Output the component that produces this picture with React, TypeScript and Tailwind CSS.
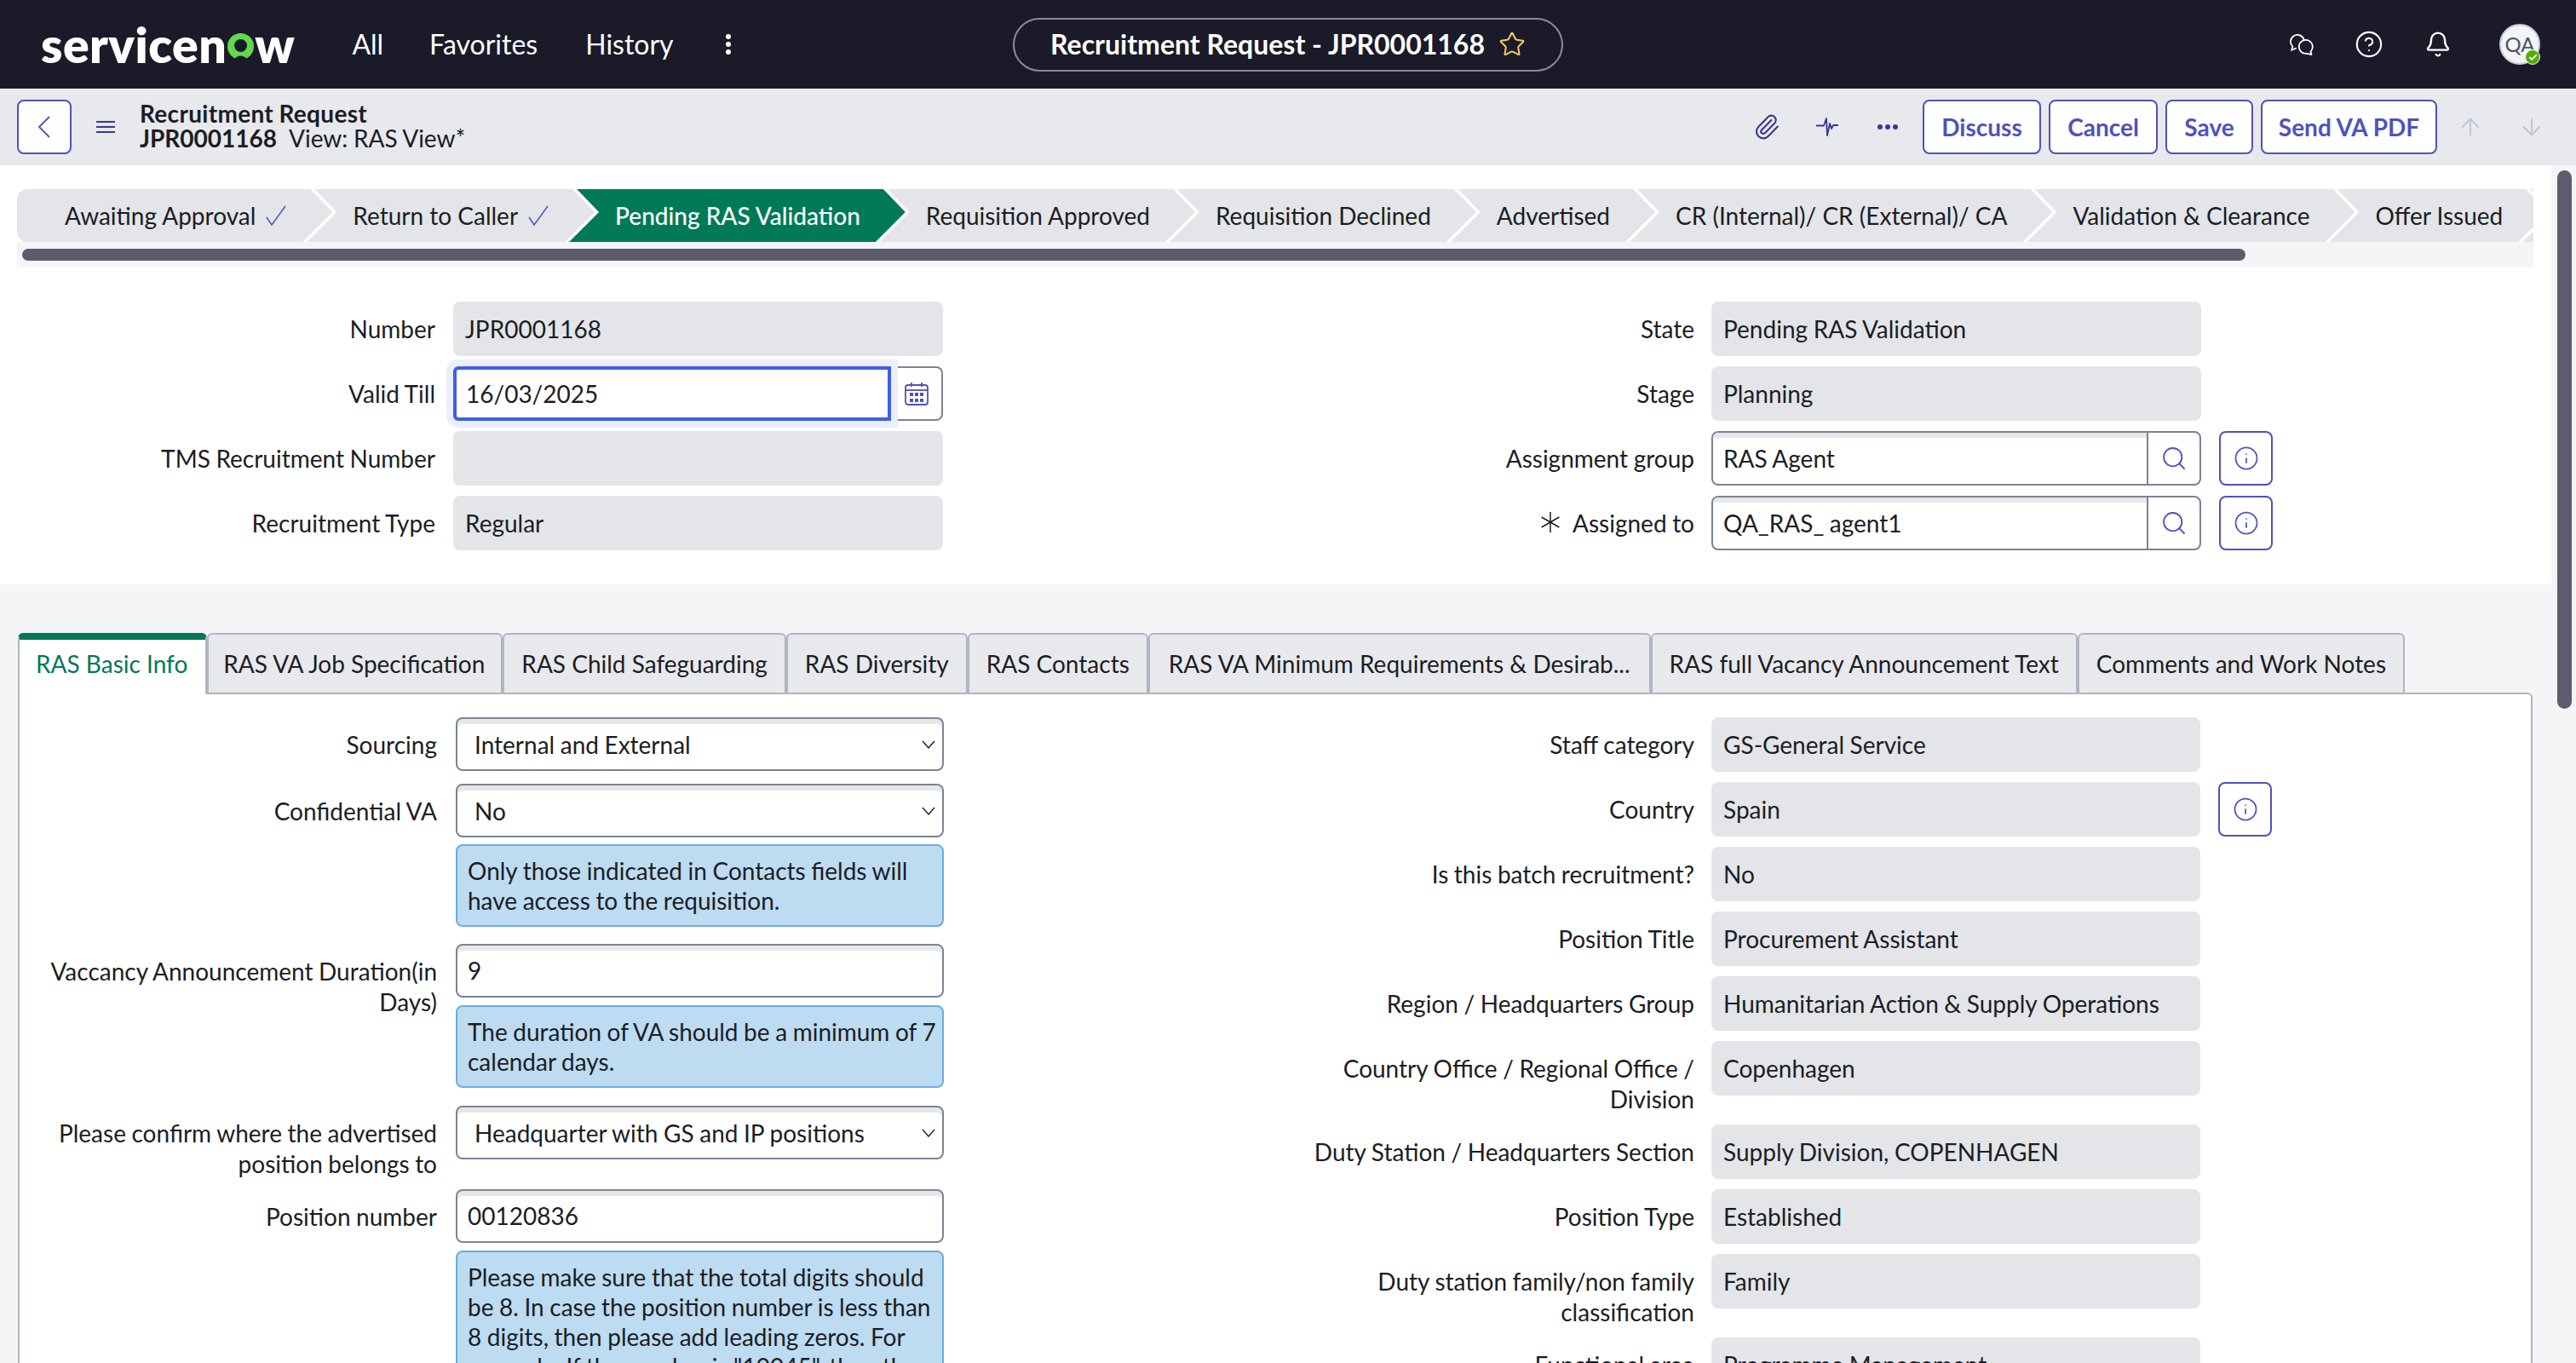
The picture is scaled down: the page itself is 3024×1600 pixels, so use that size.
import { ArrowDown, ArrowUp, Bell, Check, CircleHelp, Info, Paperclip, Search, Star } from "lucide-react";
import { ReactNode } from "react";

const steps = [
  { name: "Awaiting Approval", done: true },
  { name: "Return to Caller", done: true },
  { name: "Pending RAS Validation", active: true },
  { name: "Requisition Approved" },
  { name: "Requisition Declined" },
  { name: "Advertised" },
  { name: "CR (Internal)/ CR (External)/ CA" },
  { name: "Validation & Clearance" },
  { name: "Offer Issued" },
  { name: "" },
];

const tabs = [
  "RAS Basic Info",
  "RAS VA Job Specification",
  "RAS Child Safeguarding",
  "RAS Diversity",
  "RAS Contacts",
  "RAS VA Minimum Requirements & Desirab...",
  "RAS full Vacancy Announcement Text",
  "Comments and Work Notes",
];

const rightFields = [
  ["Staff category", "GS-General Service"],
  ["Country", "Spain"],
  ["Is this batch recruitment?", "No"],
  ["Position Title", "Procurement Assistant"],
  ["Region / Headquarters Group", "Humanitarian Action & Supply Operations"],
  ["Country Office / Regional Office / Division", "Copenhagen"],
  ["Duty Station / Headquarters Section", "Supply Division, COPENHAGEN"],
  ["Position Type", "Established"],
  ["Duty station family/non family classification", "Family"],
  ["Functional area", "Programme Management"],
];

function Logo() {
  return (
    <div className="flex items-baseline font-extrabold text-white text-[57px] leading-none tracking-[0.5px]">
      servicen
      <svg width="31" height="31" viewBox="0 0 31 31" className="mx-[1px] self-end mb-[11px]">
        <circle cx="15.5" cy="15.5" r="15.5" fill="#62d84e" />
        <circle cx="15.5" cy="14.5" r="7.5" fill="#1a1a29" />
        <path d="M7 31 Q15.5 22 24 31 Z" fill="#1a1a29" />
      </svg>
      w
    </div>
  );
}

function ChatIcon() {
  return (
    <svg width="28" height="25" viewBox="0 0 28 25" fill="none" stroke="white" strokeWidth="1.8" strokeLinejoin="round" strokeLinecap="round">
      <path d="M16.5 6.3A8 8 0 1 0 3.4 14.7L2 19l5-2.3" />
      <path d="M24.5 20.5L25.5 24 20 22.8A8 8 0 1 1 24.5 20.5Z" />
    </svg>
  );
}

function PulseIcon() {
  return (
    <svg width="26" height="23" viewBox="0 0 26 23" fill="none" stroke="#37398f" strokeWidth="1.8" strokeLinejoin="round">
      <polyline points="0,9.5 9,9.5 12,1 13,21 16,7 18,13 20,9 26,9" />
    </svg>
  );
}

function RequiredMark() {
  return (
    <svg width="24" height="24" viewBox="0 0 24 24" stroke="#1b1d24" strokeWidth="1.5" className="mr-[14px] mt-[5px]">
      <line x1="12" y1="0" x2="12" y2="24" />
      <line x1="1.6" y1="6" x2="22.4" y2="18" />
      <line x1="1.6" y1="18" x2="22.4" y2="6" />
    </svg>
  );
}

function ActionButton({ label, width }: { label: string; width: string }) {
  return (
    <button className={`${width} h-[64px] rounded-[8px] border-2 border-[#4f52bd] bg-white text-[28px] font-bold text-[#4f52bd]`}>
      {label}
    </button>
  );
}

function Label({ children, wide }: { children: ReactNode; wide?: boolean }) {
  return (
    <div className={`${wide ? "w-[512px] pl-[36px] pr-[22px]" : "w-[532px] pl-[20px] pr-[21px]"} shrink-0 pt-[14px] text-right`}>
      {children}
    </div>
  );
}

function ReadOnly({ value }: { value: string }) {
  return <div className="h-[64px] flex-1 rounded-[8px] bg-[#e3e5e9] px-[14px] leading-[64px]">{value}</div>;
}

function InfoButton() {
  return (
    <div className="ml-[21px] flex h-[64px] w-[63px] shrink-0 items-center justify-center rounded-[8px] border-2 border-[#4f52bd] bg-white">
      <Info size={30} strokeWidth={1.4} className="text-[#4f52bd]" />
    </div>
  );
}

function Lookup({ value }: { value: string }) {
  return (
    <div className="flex h-[64px] flex-1 overflow-hidden rounded-[8px] border-2 border-[#7a8494] bg-white">
      <div className="flex-1 pl-[12px] leading-[60px] shadow-[inset_0_6px_0_#e6e8e8]">{value}</div>
      <div className="flex w-[62px] items-center justify-center border-l-2 border-[#7a8494]">
        <Search size={32} strokeWidth={1.4} className="text-[#4f52bd]" />
      </div>
    </div>
  );
}

function TextInput({ value }: { value: string }) {
  return (
    <div className="h-[63px] rounded-[8px] border-2 border-[#7a8494] bg-white pl-[12px] leading-[59px] shadow-[inset_0_6px_0_#e6e8e8]">
      {value}
    </div>
  );
}

function SelectBox({ value }: { value: string }) {
  return (
    <div className="flex h-[63px] items-center justify-between rounded-[8px] border-2 border-[#7a8494] bg-white pl-[20px] pr-[8px] shadow-[inset_0_6px_0_#e6e8e8]">
      {value}
      <svg width="16" height="10" viewBox="0 0 16 10" fill="none" stroke="#1b1d24" strokeWidth="1.4">
        <polyline points="1,1 8,9 15,1" />
      </svg>
    </div>
  );
}

function Note({ children, mt = "mt-[9px]" }: { children: ReactNode; mt?: string }) {
  return (
    <div className={`${mt} rounded-[8px] border-2 border-[#6aaee0] bg-[#bddbf1] pb-[11px] pl-[12px] pr-[6px] pt-[12px] leading-[35px]`}>
      {children}
    </div>
  );
}

function BasicRow({ label, mb, children }: { label: string; mb: string; children: ReactNode }) {
  return (
    <div className={`flex ${mb}`}>
      <Label wide>{label}</Label>
      <div className="w-[573px]">{children}</div>
    </div>
  );
}

function TopRightRow({ label, children, required }: { label: string; children: ReactNode; required?: boolean }) {
  return (
    <div className="mb-[12px] flex h-[64px]">
      <div className="flex w-[500px] shrink-0 items-start justify-end pr-[20px] pt-[14px]">
        {required && <RequiredMark />}
        {label}
      </div>
      {children}
    </div>
  );
}

export default function App() {
  return (
    <div className="flex h-[1600px] w-[3024px] flex-col overflow-hidden bg-[#f4f5f7] font-['Lato',sans-serif] text-[28px] leading-[36px] text-[#1b1d24] [word-spacing:-0.6px]">
      <header className="grid h-[104px] shrink-0 grid-cols-[1fr_auto_1fr] items-center bg-[#1a1a29] text-[32px] text-white [word-spacing:0]">
        <div className="flex items-center pl-[48px]">
          <Logo />
          <span className="ml-[67px]">All</span>
          <span className="ml-[54px]">Favorites</span>
          <span className="ml-[56px]">History</span>
          <svg width="8" height="26" viewBox="0 0 8 26" fill="white" className="ml-[60px]">
            <circle cx="4" cy="4" r="3" />
            <circle cx="4" cy="13" r="3" />
            <circle cx="4" cy="22" r="3" />
          </svg>
        </div>
        <div className="flex h-[63px] w-[646px] items-center justify-center gap-[16px] rounded-full border-2 border-[#8c8c99] font-bold">
          Recruitment Request - JPR0001168
          <Star size={32} strokeWidth={1.5} className="text-[#f6c868]" />
        </div>
        <div className="flex items-center justify-end pr-[42px]">
          <ChatIcon />
          <CircleHelp size={34} strokeWidth={1.5} className="ml-[48px]" />
          <Bell size={32} strokeWidth={1.8} className="ml-[48px]" />
          <div className="relative ml-[56px] flex h-[48px] w-[48px] items-center justify-center rounded-full border-2 border-[#c9ccd6] bg-[#f3f4f6] text-[24px] text-[#4b5563]">
            QA
            <div className="absolute -bottom-[2px] -right-[2px] flex h-[18px] w-[18px] items-center justify-center rounded-full border border-white bg-[#4caf00]">
              <Check size={11} strokeWidth={4} className="text-white" />
            </div>
          </div>
        </div>
      </header>

      <div className="flex h-[90px] shrink-0 items-center bg-[#e7e9ed] pl-[20px] pr-[36px]">
        <div className="flex h-[64px] w-[64px] items-center justify-center rounded-[8px] border-2 border-[#4f52bd] bg-white">
          <svg width="16" height="26" viewBox="0 0 16 26" fill="none" stroke="#4f52bd" strokeWidth="1.8">
            <polyline points="14,1 2,13 14,25" />
          </svg>
        </div>
        <svg width="22" height="14" viewBox="0 0 22 14" stroke="#37398f" strokeWidth="2" className="ml-[29px]">
          <line x1="0" y1="1" x2="22" y2="1" />
          <line x1="0" y1="7" x2="22" y2="7" />
          <line x1="0" y1="13" x2="22" y2="13" />
        </svg>
        <div className="ml-[29px] -mt-[2px] leading-[29px]">
          <div className="font-bold tracking-[0.3px]">Recruitment Request</div>
          <div>
            <span className="font-bold">JPR0001168</span>
            <span className="ml-[14px]">View: RAS View*</span>
          </div>
        </div>
        <div className="ml-auto flex items-center">
          <Paperclip size={32} strokeWidth={1.6} className="text-[#37398f]" />
          <div className="ml-[42px]">
            <PulseIcon />
          </div>
          <svg width="24" height="8" viewBox="0 0 24 8" fill="#37398f" className="ml-[46px]">
            <circle cx="3" cy="4" r="3" />
            <circle cx="12" cy="4" r="3" />
            <circle cx="21" cy="4" r="3" />
          </svg>
          <div className="ml-[29px] flex gap-[9px]">
            <ActionButton label="Discuss" width="w-[139px]" />
            <ActionButton label="Cancel" width="w-[128px]" />
            <ActionButton label="Save" width="w-[103px]" />
            <ActionButton label="Send VA PDF" width="w-[207px]" />
          </div>
          <ArrowUp size={32} strokeWidth={1.4} className="ml-[23px] text-[#bec3d6]" />
          <ArrowDown size={32} strokeWidth={1.4} className="ml-[40px] text-[#bec3d6]" />
        </div>
      </div>

      <div className="flex min-h-0 flex-1">
        <main className="w-[2995px] shrink-0 overflow-hidden">
          <section className="bg-white pb-[28px] pt-[28px]">
            <div className="mx-[20px] w-[2954px]">
              <div className="flex h-[62px] overflow-hidden [word-spacing:0]">
                {steps.map((s, i) => (
                  <div
                    key={i}
                    className={`flex h-[62px] shrink-0 items-center whitespace-nowrap ${s.done ? "pr-[54px]" : "pr-[53px]"} ${
                      i === 0
                        ? "rounded-l-[12px] pl-[56px] [clip-path:polygon(0_0,calc(100%_-_26px)_0,100%_27px,calc(100%_-_35px)_100%,0_100%)]"
                        : "-ml-[30px] pl-[54px] [clip-path:polygon(9px_0,calc(100%_-_26px)_0,100%_27px,calc(100%_-_35px)_100%,0_100%,35px_27px)]"
                    } ${s.active ? "bg-[#007a56] font-medium text-white" : "bg-[#e3e5e9]"}`}
                  >
                    {s.name}
                    {s.done && (
                      <svg width="24" height="24" viewBox="0 0 24 24" fill="none" stroke="#4f52bd" strokeWidth="1.5" className="ml-[12px]">
                        <polyline points="1,14 7,23 23,1" />
                      </svg>
                    )}
                  </div>
                ))}
              </div>
              <div className="h-[30px] bg-[#f4f5f7] py-[8px] pl-[6px]">
                <div className="h-[14px] w-[2610px] rounded-[8px] bg-[#5c5c6e]" />
              </div>
            </div>

            <div className="mt-[40px] flex">
              <div className="w-[1107px] shrink-0">
                <div className="mb-[12px] flex">
                  <Label>Number</Label>
                  <ReadOnly value="JPR0001168" />
                </div>
                <div className="mb-[12px] flex">
                  <Label>Valid Till</Label>
                  <div className="flex h-[64px] flex-1">
                    <div className="relative z-10 flex-1 rounded-l-[6px] border-4 border-[#3f5fe0] bg-white pl-[11px] leading-[56px] shadow-[0_0_0_8px_#ebeefb]">
                      16/03/2025
                    </div>
                    <div className="flex w-[61px] items-center justify-center rounded-r-[8px] border-2 border-l-0 border-[#7a8494] bg-white">
                      <svg width="28" height="28" viewBox="0 0 28 28" fill="none" stroke="#4f52bd" strokeWidth="1.8">
                        <rect x="1" y="4" width="26" height="23" rx="3" />
                        <line x1="1" y1="10" x2="27" y2="10" />
                        <line x1="8" y1="1" x2="8" y2="6" />
                        <line x1="20" y1="1" x2="20" y2="6" />
                        <g fill="#4f52bd" stroke="none">
                          <rect x="6" y="13" width="4" height="4" />
                          <rect x="12" y="13" width="4" height="4" />
                          <rect x="18" y="13" width="4" height="4" />
                          <rect x="6" y="20" width="4" height="4" />
                          <rect x="12" y="20" width="4" height="4" />
                          <rect x="18" y="20" width="4" height="4" />
                        </g>
                      </svg>
                    </div>
                  </div>
                </div>
                <div className="mb-[12px] flex">
                  <Label>TMS Recruitment Number</Label>
                  <ReadOnly value="" />
                </div>
                <div className="mb-[12px] flex">
                  <Label>Recruitment Type</Label>
                  <ReadOnly value="Regular" />
                </div>
              </div>

              <div className="ml-[402px] w-[1159px] shrink-0">
                <TopRightRow label="State">
                  <div className="flex w-[575px]">
                    <ReadOnly value="Pending RAS Validation" />
                  </div>
                </TopRightRow>
                <TopRightRow label="Stage">
                  <div className="flex w-[575px]">
                    <ReadOnly value="Planning" />
                  </div>
                </TopRightRow>
                <TopRightRow label="Assignment group">
                  <div className="flex w-[575px]">
                    <Lookup value="RAS Agent" />
                  </div>
                  <InfoButton />
                </TopRightRow>
                <TopRightRow label="Assigned to" required>
                  <div className="flex w-[575px]">
                    <Lookup value="QA_RAS_ agent1" />
                  </div>
                  <InfoButton />
                </TopRightRow>
              </div>
            </div>
          </section>

          <section className="pl-[21px] pr-[22px] pt-[57px]">
            <div className="relative z-10 -mb-[2px] flex h-[72px] [word-spacing:0]">
              {tabs.map((t, i) => (
                <div
                  key={t}
                  className={
                    i === 0
                      ? "rounded-t-[6px] border-x-2 border-t-8 border-x-[#b0b5c2] border-t-[#00785a] bg-white pl-[19px] pr-[21px] pt-[10px] text-[#00785a]"
                      : `rounded-t-[6px] border-x-2 border-b-2 border-t-2 border-[#b0b5c2] bg-[#e8e9ed] pt-[16px] ${
                          i === 5 ? "px-[22px]" : i === 1 ? "pl-[17px] pr-[19px]" : "px-[20px]"
                        }`
                  }
                >
                  {t}
                </div>
              ))}
            </div>
            <div className="flex rounded-tr-[6px] border-2 border-[#b0b5c2] bg-white pt-[27px]">
              <div className="w-[1085px] shrink-0">
                <BasicRow label="Sourcing" mb="mb-[15px]">
                  <SelectBox value="Internal and External" />
                </BasicRow>
                <BasicRow label="Confidential VA" mb="mb-[20px]">
                  <SelectBox value="No" />
                  <Note mt="mt-[8px]">Only those indicated in Contacts fields will have access to the requisition.</Note>
                </BasicRow>
                <BasicRow label="Vaccancy Announcement Duration(in Days)" mb="mb-[21px]">
                  <TextInput value="9" />
                  <Note>The duration of VA should be a minimum of 7 calendar days.</Note>
                </BasicRow>
                <BasicRow label="Please confirm where the advertised position belongs to" mb="mb-[12px]">
                  <SelectBox value="Headquarter with GS and IP positions" />
                </BasicRow>
                <BasicRow label="Position number" mb="mb-[12px]">
                  <TextInput value="00120836" />
                  <Note>
                    Please make sure that the total digits should be 8. In case the position number is less than 8 digits, then please add leading zeros. For example, If the number is "10045", then the position number should be "00010045".
                  </Note>
                </BasicRow>
              </div>
              <div className="ml-[401px] flex-1">
                {rightFields.map(([label, value]) => (
                  <div key={label} className="mb-[12px] flex">
                    <div className="w-[500px] shrink-0 pl-[20px] pr-[20px] pt-[14px] text-right">{label}</div>
                    <div className="flex h-[64px] w-[574px]">
                      <ReadOnly value={value} />
                    </div>
                    {label === "Country" && <InfoButton />}
                  </div>
                ))}
              </div>
            </div>
          </section>
        </main>
        <aside className="flex-1 bg-[#f4f5f7] pl-[7px] pt-[6px]">
          <div className="h-[632px] w-[17px] rounded-full bg-[#5c5c6e]" />
        </aside>
      </div>
    </div>
  );
}
